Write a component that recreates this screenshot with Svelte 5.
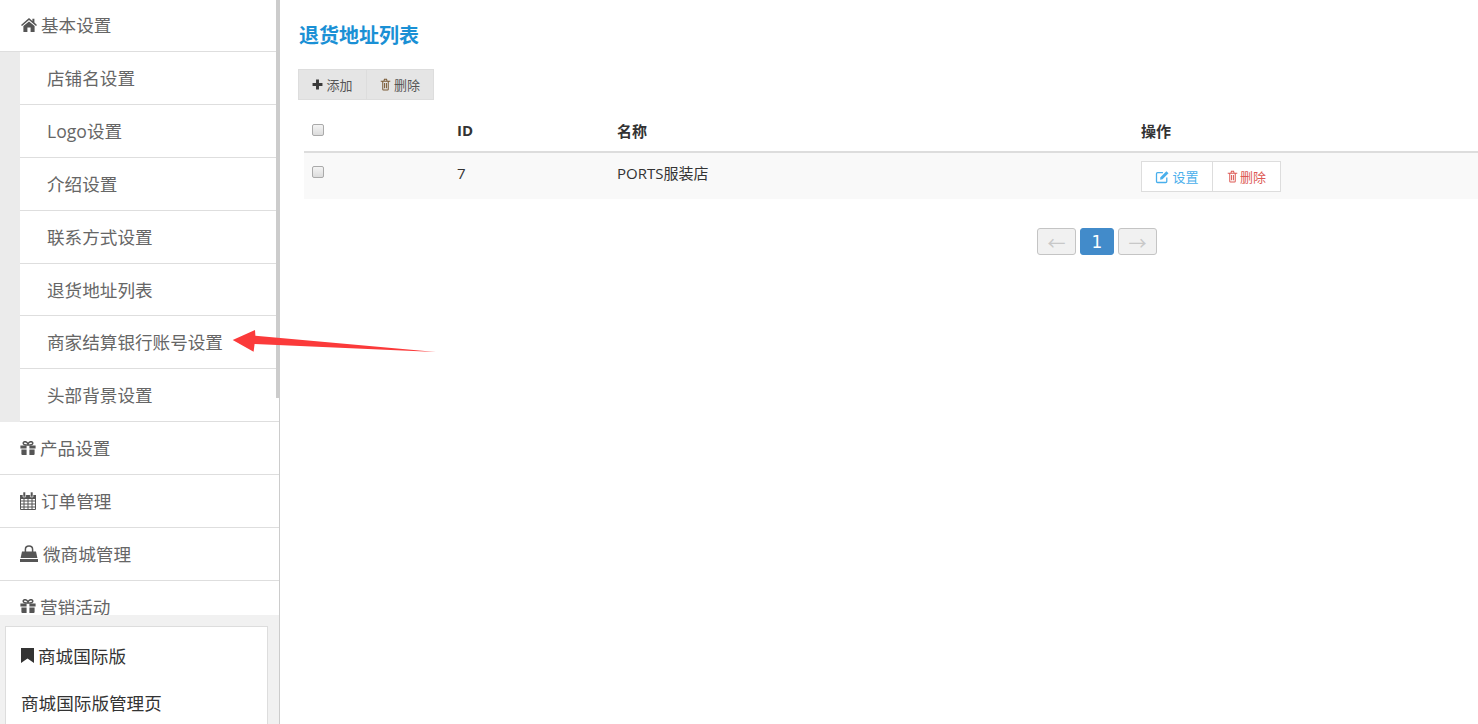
<script lang="ts">
  const subItems = ['店铺名设置', 'Logo设置', '介绍设置', '联系方式设置', '退货地址列表', '商家结算银行账号设置', '头部背景设置'];
</script>

{#snippet home()}
  <svg class="ic home" viewBox="0 0 16 14" width="16" height="14"><path d="M8 0 L11.4 2.9 V.8 H13.4 V4.6 L16 6.9 L15 8 L8 2 L1 8 L0 6.9 Z M8 3.4 L13.6 8.1 V14 H9.6 V9.6 H6.4 V14 H2.4 V8.1 Z" /></svg>
{/snippet}
{#snippet gift()}
  <svg class="ic gift" viewBox="0 0 16 14" width="16" height="14"><path d="M.4 4.4 H6.6 V7.6 H.4 Z M9.4 4.4 H15.6 V7.6 H9.4 Z M1.4 8.4 H6.6 V14 H2.4 Q1.4 14 1.4 13 Z M9.4 8.4 H14.6 V13 Q14.6 14 13.6 14 H9.4 Z" /><path d="M8 4 C5.8 4 3.2 3.8 3.2 2.2 C3.2 .2 6.8 -.2 8 3 C9.2 -.2 12.8 .2 12.8 2.2 C12.8 3.8 10.2 4 8 4 Z" fill="none" stroke="currentColor" stroke-width="1.5" /></svg>
{/snippet}
{#snippet calendar()}
  <svg class="ic cal" viewBox="0 0 16 18" width="16" height="18"><path fill="none" stroke="currentColor" stroke-width="1" d="M.5 3.5 H15.5 V17.5 H.5 Z M.5 9 H15.5 M.5 12 H15.5 M.5 15 H15.5 M4 7 V17.5 M8 7 V17.5 M12 7 V17.5" /><path d="M0 3 H16 V7 H0 Z" /><path d="M3 0 H5.6 V5 H3 Z M10.4 0 H13 V5 H10.4 Z" fill="#555" stroke="#fff" stroke-width=".6" /></svg>
{/snippet}
{#snippet bag()}
  <svg class="ic bag" viewBox="0 0 18 17" width="18" height="17"><path d="M2 6.4 H16 L17.4 13 H.6 Z M0 14 H18 V17 H0 Z" /><path d="M5.4 8.6 V4.4 C5.4 -.2 12.6 -.2 12.6 4.4 V8.6" fill="none" stroke="currentColor" stroke-width="1.5" /></svg>
{/snippet}

<div class="page">
  <aside class="sidebar">
    <nav class="menu">
      <a class="row top">{@render home()}基本设置</a>
      <div class="sub">
        {#each subItems as item}
          <a class="row">{item}</a>
        {/each}
      </div>
      <a class="row top">{@render gift()}产品设置</a>
      <a class="row top">{@render calendar()}订单管理</a>
      <a class="row top">{@render bag()}微商城管理</a>
      <a class="row top">{@render gift()}营销活动</a>
    </nav>
    <div class="scrollbar"></div>
    <div class="dock">
      <div class="card">
        <div class="card-title">
          <svg viewBox="0 0 13 15" width="13" height="15"><path d="M0 0 H13 V15 L6.5 10.6 L0 15 Z" /></svg>商城国际版
        </div>
        <div class="card-link">商城国际版管理页</div>
      </div>
    </div>
  </aside>

  <main class="content">
    <h1>退货地址列表</h1>

    <div class="toolbar">
      <button class="tool">
        <svg viewBox="0 0 12 12" width="11" height="11"><path d="M4.4 .6 H7.6 V4.4 H11.4 V7.6 H7.6 V11.4 H4.4 V7.6 H.6 V4.4 H4.4 Z" fill="#3a3a3a" /></svg>添加
      </button>
      <button class="tool">
        <svg viewBox="0 0 12 14" width="11" height="13"><path d="M.8 3.4 H11.2 M3 3.4 V12.2 Q3 13 3.8 13 H8.2 Q9 13 9 12.2 V3.4 M4.3 3.2 L4.8 1.4 H7.2 L7.7 3.2 M5 5.4 V11 M7 5.4 V11" fill="none" stroke="#7a5a34" stroke-width="1.1" /></svg>删除
      </button>
    </div>

    <table>
      <thead>
        <tr>
          <th class="c1"><span class="check"></span></th>
          <th class="c2">ID</th>
          <th class="c3">名称</th>
          <th>操作</th>
        </tr>
      </thead>
      <tbody>
        <tr>
          <td class="c1"><span class="check"></span></td>
          <td class="c2">7</td>
          <td class="c3">PORTS服装店</td>
          <td>
            <div class="actions">
              <button class="act blue">
                <svg viewBox="0 0 14 14" width="15" height="15"><path d="M11 8 V11.6 Q11 12.6 10 12.6 H2.4 Q1.4 12.6 1.4 11.6 V4.4 Q1.4 3.4 2.4 3.4 H7.4" fill="none" stroke="currentColor" stroke-width="1.2" /><path d="M5 7.6 L10.6 2 L12.6 4 L7 9.6 L4.8 10 Z" fill="currentColor" /></svg>设置
              </button>
              <button class="act red">
                <svg viewBox="0 0 12 14" width="11" height="13"><path d="M.8 3.4 H11.2 M3 3.4 V12.2 Q3 13 3.8 13 H8.2 Q9 13 9 12.2 V3.4 M4.3 3.2 L4.8 1.4 H7.2 L7.7 3.2 M5 5.4 V11 M7 5.4 V11" fill="none" stroke="currentColor" stroke-width="1.1" /></svg>删除
              </button>
            </div>
          </td>
        </tr>
      </tbody>
    </table>

    <div class="pager">
      <span class="pg">←</span>
      <span class="pg on">1</span>
      <span class="pg">→</span>
    </div>
  </main>

  <svg class="arrow" viewBox="0 0 210 34" width="210" height="34"><path d="M1.7 10 L24 0 L24.4 5.7 L205 21.9 L23.6 14 L22.6 21.7 Z" fill="#fb3a3a" /></svg>
</div>

<style>
  :global(body) {
    margin: 0;
    background: #fff;
  }
  .page {
    position: relative;
    display: flex;
    height: 724px;
    overflow: hidden;
    font-family: "Open Sans", "Noto Sans CJK SC", sans-serif;
    color: #333;
  }

  /* sidebar */
  .sidebar {
    position: relative;
    display: flex;
    flex-direction: column;
    flex: none;
    width: 279px;
    border-right: 1px solid #ccc;
    overflow: hidden;
  }
  .menu {
    flex: 1;
    min-height: 0;
    margin-top: -0.5px;
    overflow: hidden;
  }
  .row {
    display: flex;
    align-items: center;
    box-sizing: border-box;
    height: 52.83px;
    padding-bottom: 1px;
    border-bottom: 1px solid #dedede;
    font-size: 17.6px;
    color: #666;
  }
  .top {
    padding-left: 20px;
  }
  .ic {
    flex: none;
    fill: #555;
    color: #555;
  }
  .home {
    margin: 0 4px 0 1px;
  }
  .gift {
    margin-right: 4px;
  }
  .cal {
    margin-right: 5px;
    margin-top: 2px;
  }
  .bag {
    margin-right: 5px;
    margin-top: 1px;
  }
  .sub {
    padding-left: 20px;
    background: #ebebeb;
  }
  .sub .row {
    padding-left: 27px;
    background: #fff;
  }
  .scrollbar {
    position: absolute;
    top: 0;
    right: 0;
    width: 3px;
    height: 398px;
    background: #ccc;
  }
  .dock {
    flex: none;
    height: 109px;
    padding: 11px 11px 0 5px;
    box-sizing: border-box;
    background: #f1f1f1;
  }
  .card {
    box-sizing: border-box;
    height: 110px;
    padding: 15px 15px 0;
    background: #fff;
    border: 1px solid #ddd;
    color: #333;
    font-size: 17.6px;
  }
  .card-title {
    display: flex;
    align-items: center;
    gap: 4px;
    height: 27px;
    margin-bottom: 21px;
  }
  .card-title svg {
    flex: none;
    fill: #333;
  }
  .card-link {
    height: 27px;
    line-height: 27px;
  }

  /* content */
  .content {
    flex: 1;
    min-width: 0;
    padding: 0 0 0 18px;
  }
  h1 {
    margin: 21px 0 19px 1px;
    font-size: 20px;
    line-height: 29px;
    font-weight: 700;
    color: #1a90d5;
  }
  .toolbar {
    display: inline-flex;
    vertical-align: top;
    border: 1px solid #ddd;
    background: #e5e5e5;
  }
  .tool {
    display: flex;
    align-items: center;
    justify-content: center;
    gap: 3px;
    height: 29px;
    padding: 0;
    border: 0;
    background: none;
    font: inherit;
    font-size: 13px;
    color: #555;
  }
  .tool:first-child {
    width: 68px;
    border-right: 1px solid #ddd;
  }
  .tool:last-child {
    width: 66px;
  }
  table {
    display: table;
    box-sizing: border-box;
    width: 1174px;
    margin: 12px 0 0 6px;
    border-collapse: collapse;
    font-size: 15px;
    color: #333;
  }
  th {
    height: 40px;
    padding: 0 0 3px;
    box-sizing: border-box;
    text-align: left;
    font-weight: 700;
    border-bottom: 2px solid #ddd;
  }
  td {
    height: 46px;
    padding: 0;
    background: #f9f9f9;
    vertical-align: top;
  }
  td.c2,
  td.c3 {
    padding-top: 10px;
    height: 36px;
    line-height: 20px;
  }
  .c1 {
    width: 153px;
  }
  .c2 {
    width: 160px;
  }
  .c3 {
    width: 524px;
  }
  .check {
    display: block;
    box-sizing: border-box;
    width: 12px;
    height: 12px;
    margin-left: 8px;
    border: 1px solid #aaa;
    border-radius: 2px;
    background: linear-gradient(#f4f4f4, #dcdcdc);
  }
  th .check {
    margin-top: 0;
  }
  td .check {
    margin-top: 13px;
  }
  .actions {
    display: flex;
    margin-top: 8px;
  }
  .act {
    display: flex;
    align-items: center;
    justify-content: center;
    gap: 2px;
    box-sizing: border-box;
    height: 31px;
    padding: 0;
    border: 1px solid #ddd;
    background: #fff;
    font: inherit;
    font-size: 13px;
  }
  .blue {
    width: 72px;
    color: #49afec;
  }
  .red {
    width: 69px;
    margin-left: -1px;
    color: #dd5a55;
  }
  .pager {
    display: flex;
    justify-content: center;
    gap: 4px;
    width: 120px;
    margin: 29px 0 0 739px;
  }
  .pg {
    display: flex;
    align-items: center;
    justify-content: center;
    box-sizing: border-box;
    width: 39px;
    height: 27px;
    border: 1px solid #c4c4c4;
    border-radius: 3px;
    background: #f1f1f1;
    color: #c8c8c8;
    font-size: 18px;
    flex: none;
  }
  .on {
    width: 34px;
    border-color: #428bca;
    background: #428bca;
    color: #fff;
    font-family: "DejaVu Sans", sans-serif;
    font-size: 17px;
  }

  /* annotation drawn over the screenshot */
  .arrow {
    position: absolute;
    left: 231px;
    top: 330px;
  }
</style>
